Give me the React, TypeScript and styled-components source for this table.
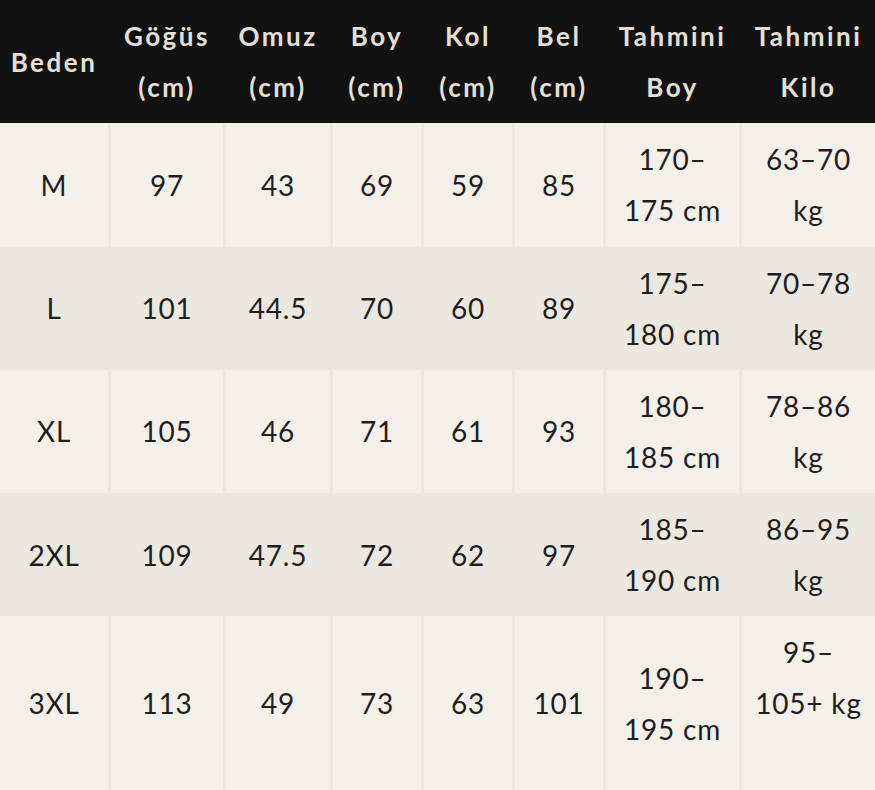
import React from "react";
import styled, { createGlobalStyle } from "styled-components";

const GlobalStyle = createGlobalStyle`
    body {
        margin: 0;
        background: #f3efe9;
        font-family: Lato, "Noto Sans", sans-serif;
    }
`;

const Table = styled.div`
    width: 875px;
    display: flex;
    flex-direction: column;
`;

const Row = styled.div<{ $bg: string }>`
    display: grid;
    grid-template-columns: 108px 112px 104px 88px 88px 88px 133px 133px;
    column-gap: 3px;
    background-color: #ebe8e1;
    & > div {
        background-color: ${(p) => p.$bg};
    }
`;

const HeadRow = styled(Row)`
    background-color: #121212;
`;

const Cell = styled.div`
    display: flex;
    flex-direction: column;
    justify-content: center;
    align-items: center;
    padding: 11px 4px 10.3px;
    font-size: 28px;
    line-height: 51px;
    letter-spacing: 0.8px;
    color: #1e1e1e;
    text-align: center;
    white-space: nowrap;
`;

const HeadCell = styled(Cell)`
    font-size: 26px;
    font-weight: 700;
    letter-spacing: 2.5px;
    color: #e4e0d8;
`;

const headers = [
    ["Beden"],
    ["Göğüs", "(cm)"],
    ["Omuz", "(cm)"],
    ["Boy", "(cm)"],
    ["Kol", "(cm)"],
    ["Bel", "(cm)"],
    ["Tahmini", "Boy"],
    ["Tahmini", "Kilo"],
];

const rows: string[][][] = [
    [["M"], ["97"], ["43"], ["69"], ["59"], ["85"], ["170–", "175 cm"], ["63–70", "kg"]],
    [["L"], ["101"], ["44.5"], ["70"], ["60"], ["89"], ["175–", "180 cm"], ["70–78", "kg"]],
    [["XL"], ["105"], ["46"], ["71"], ["61"], ["93"], ["180–", "185 cm"], ["78–86", "kg"]],
    [["2XL"], ["109"], ["47.5"], ["72"], ["62"], ["97"], ["185–", "190 cm"], ["86–95", "kg"]],
    [["3XL"], ["113"], ["49"], ["73"], ["63"], ["101"], ["190–", "195 cm"], ["95–", "105+ kg", "\u00a0"]],
];

const Lines = ({ lines }: { lines: string[] }) => (
    <>
        {lines.map((l, i) => (
            <span key={i}>{l}</span>
        ))}
    </>
);

export default function App() {
    return (
        <>
            <GlobalStyle />
            <Table>
                <HeadRow $bg="#121212">
                    {headers.map((h, i) => (
                        <HeadCell key={i}>
                            <Lines lines={h} />
                        </HeadCell>
                    ))}
                </HeadRow>
                {rows.map((r, ri) => (
                    <Row key={ri} $bg={ri % 2 === 0 ? "#f3efe9" : "#ebe8e1"}>
                        {r.map((c, ci) => (
                            <Cell key={ci}>
                                <Lines lines={c} />
                            </Cell>
                        ))}
                    </Row>
                ))}
            </Table>
        </>
    );
}
